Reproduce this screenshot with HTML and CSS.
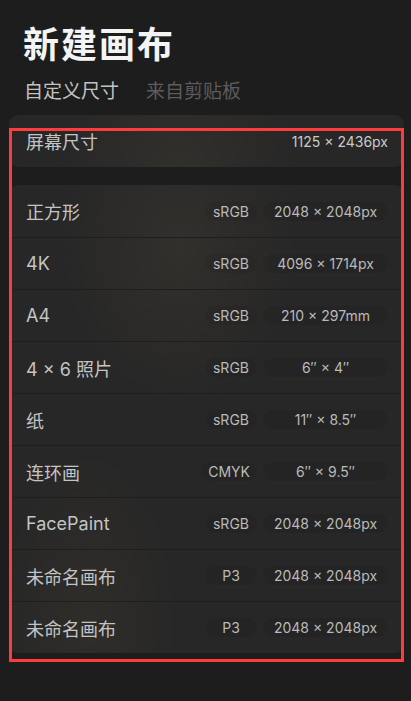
FILE: index.html
```html
<!DOCTYPE html>
<html lang="zh-CN">
<head>
  <meta charset="UTF-8">
  <title>新建画布</title>
  <link rel="stylesheet" href="styles.css">
</head>
<body>

  <h1 class="title">新建画布</h1>

  <div class="tabs">
    <span class="tab active">自定义尺寸</span>
    <span class="tab">来自剪贴板</span>
  </div>

  <div class="panel">
    <div class="group">
      <div class="row">
        <span class="name">屏幕尺寸</span>
        <span class="plain">1125 × 2436px</span>
      </div>
    </div>

    <div class="group">
      <div class="row">
        <span class="name">正方形</span>
        <span class="pill space">sRGB</span>
        <span class="pill size">2048 × 2048px</span>
      </div>
      <div class="row">
        <span class="name">4K</span>
        <span class="pill space">sRGB</span>
        <span class="pill size">4096 × 1714px</span>
      </div>
      <div class="row">
        <span class="name">A4</span>
        <span class="pill space">sRGB</span>
        <span class="pill size">210 × 297mm</span>
      </div>
      <div class="row">
        <span class="name">4 × 6 照片</span>
        <span class="pill space">sRGB</span>
        <span class="pill size">6″ × 4″</span>
      </div>
      <div class="row">
        <span class="name">纸</span>
        <span class="pill space">sRGB</span>
        <span class="pill size">11″ × 8.5″</span>
      </div>
      <div class="row">
        <span class="name">连环画</span>
        <span class="pill space">CMYK</span>
        <span class="pill size">6″ × 9.5″</span>
      </div>
      <div class="row">
        <span class="name">FacePaint</span>
        <span class="pill space">sRGB</span>
        <span class="pill size">2048 × 2048px</span>
      </div>
      <div class="row">
        <span class="name">未命名画布</span>
        <span class="pill space">P3</span>
        <span class="pill size">2048 × 2048px</span>
      </div>
      <div class="row">
        <span class="name">未命名画布</span>
        <span class="pill space">P3</span>
        <span class="pill size">2048 × 2048px</span>
      </div>
    </div>

    <div class="mark"></div>
  </div>

</body>
</html>
```

FILE: styles.css
```css
body {
  margin: 0;
  width: 411px;
  height: 701px;
  overflow: hidden;
  background: #1d1d1d;
  font-family: Inter, "Noto Sans CJK SC", sans-serif;
  color: #c9c9c9;
}
.title {
  margin: 0;
  padding: 20px 0 0 23px;
  font-family: "Noto Sans CJK SC", sans-serif;
  font-size: 36px;
  font-weight: bold;
  line-height: 44px;
  letter-spacing: 2px;
  color: #f4f4f4;
}
.tabs {
  display: flex;
  gap: 27px;
  padding: 13px 0 0 24px;
  font-family: "Noto Sans CJK SC", sans-serif;
  font-size: 19px;
  line-height: 26px;
}
.tab {
  color: #5c5c5c;
}
.tab.active {
  color: #c2c2c2;
}
.panel {
  position: relative;
  margin: 12px 7px 0 9px;
  display: flex;
  flex-direction: column;
  gap: 18px;
}
.group {
  border-radius: 9px;
  overflow: hidden;
  background:
    radial-gradient(ellipse 120px 160px at 170px 60px, rgba(90, 78, 62, 0.22), transparent),
    radial-gradient(ellipse 90px 180px at 80px 440px, rgba(80, 70, 50, 0.2), transparent),
    #272727;
}
.row {
  display: flex;
  align-items: center;
  height: 51px;
  padding: 0 16px 0 17px;
  border-top: 1px solid #1e1e1e;
}
.row:first-child {
  border-top: none;
  height: 52px;
}
.name {
  flex: 1;
  font-size: 18px;
  color: #c4c4c4;
}
.plain {
  font-size: 14px;
  color: #cacaca;
}
.pill {
  height: 19px;
  line-height: 19px;
  border-radius: 10px;
  background: rgba(0, 0, 0, 0.06);
  text-align: center;
  font-size: 14px;
  color: #bababa;
}
.space {
  padding: 0 7px;
  min-width: 38px;
}
.size {
  width: 125px;
  margin-left: 6px;
}
.mark {
  position: absolute;
  left: 0;
  top: 13px;
  width: 389px;
  height: 528px;
  border: 3px solid #ff3b3b;
  pointer-events: none;
}
```
